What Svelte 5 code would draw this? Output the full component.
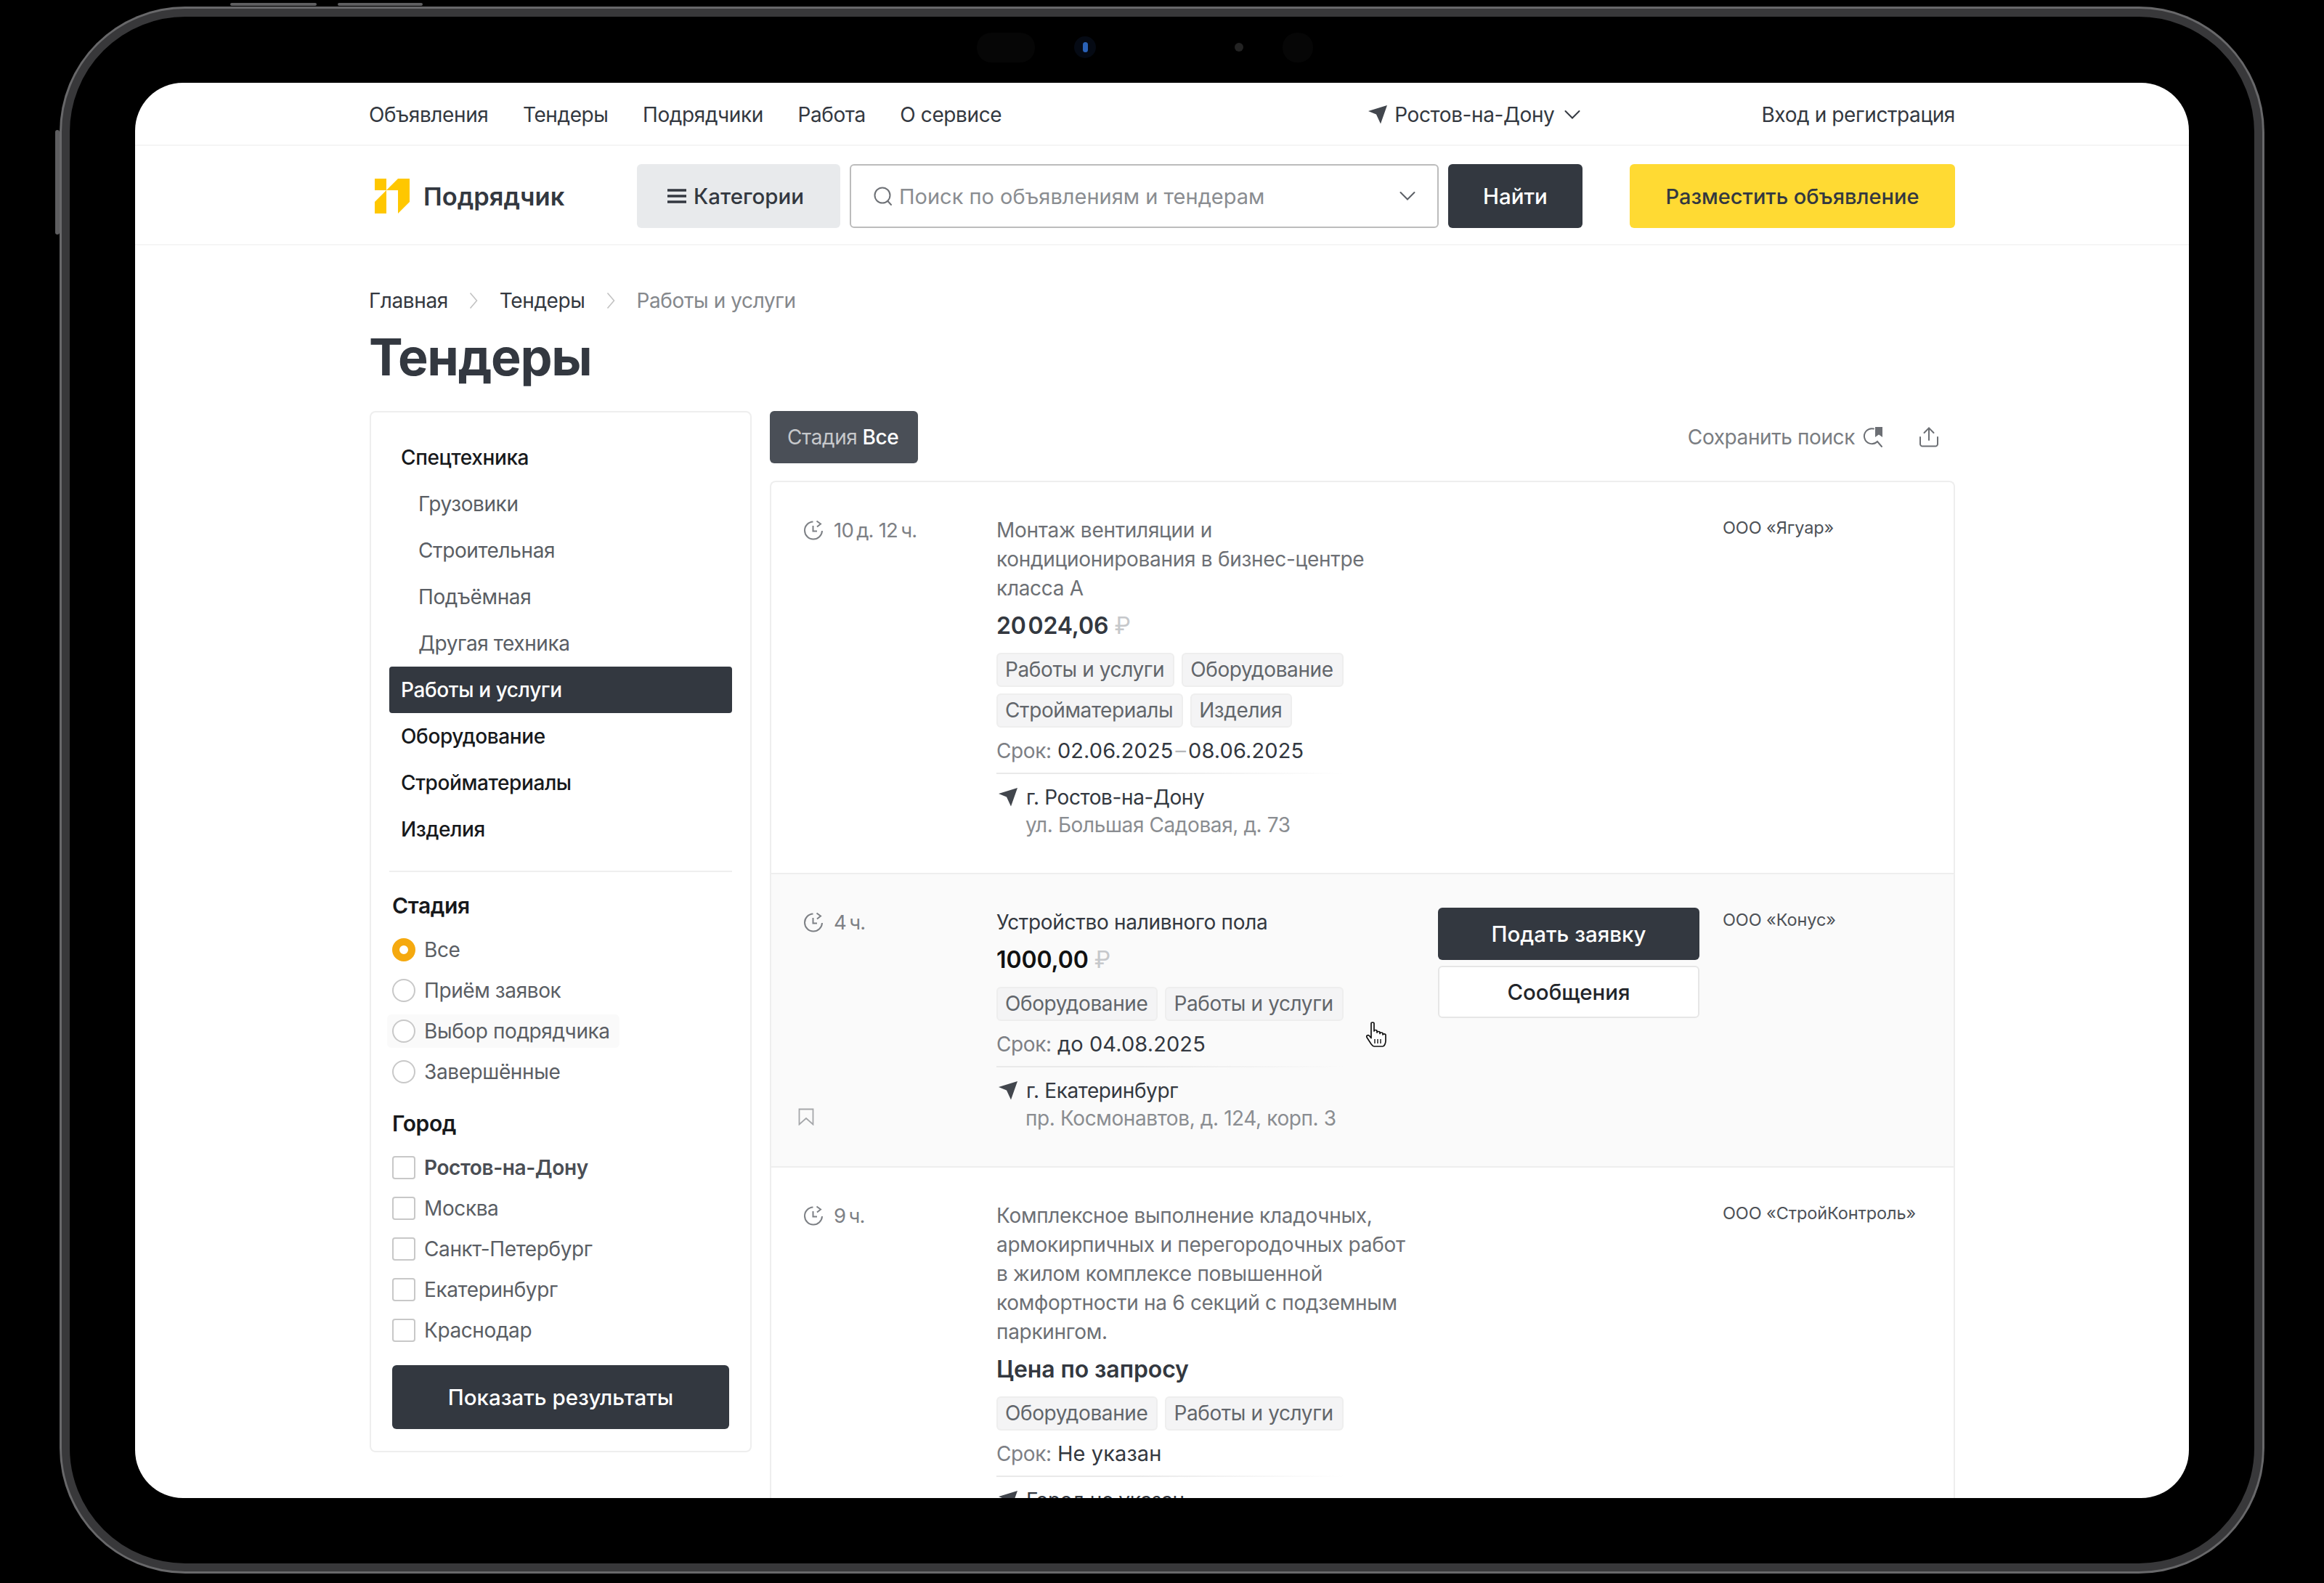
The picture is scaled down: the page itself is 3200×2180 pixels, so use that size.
<script>
  const navLinks = ['Объявления', 'Тендеры', 'Подрядчики', 'Работа', 'О сервисе'];

  const categories = [
    { label: 'Спецтехника', kind: 'top' },
    { label: 'Грузовики', kind: 'sub' },
    { label: 'Строительная', kind: 'sub' },
    { label: 'Подъёмная', kind: 'sub' },
    { label: 'Другая техника', kind: 'sub' },
    { label: 'Работы и услуги', kind: 'active' },
    { label: 'Оборудование', kind: 'top' },
    { label: 'Стройматериалы', kind: 'top' },
    { label: 'Изделия', kind: 'top' }
  ];

  const stages = ['Все', 'Приём заявок', 'Выбор подрядчика', 'Завершённые'];
  const cities = ['Ростов-на-Дону', 'Москва', 'Санкт-Петербург', 'Екатеринбург', 'Краснодар'];

  const tenders = [
    {
      time: '10\u2009д. 12\u2009ч.',
      title: ['Монтаж вентиляции и', 'кондиционирования в бизнес-центре', 'класса А'],
      price: '20\u200a024,06',
      tags: ['Работы и услуги', 'Оборудование', 'Стройматериалы', 'Изделия'],
      term: ['02.06.2025', '08.06.2025'],
      city: 'г. Ростов-на-Дону',
      address: 'ул. Большая Садовая, д. 73',
      org: 'ООО «Ягуар»'
    },
    {
      time: '4\u2009ч.',
      title: ['Устройство наливного пола'],
      price: '1000,00',
      tags: ['Оборудование', 'Работы и услуги'],
      term: ['до 04.08.2025'],
      city: 'г. Екатеринбург',
      address: 'пр. Космонавтов, д. 124, корп. 3',
      org: 'ООО «Конус»',
      hovered: true
    },
    {
      time: '9\u2009ч.',
      title: [
        'Комплексное выполнение кладочных,',
        'армокирпичных и перегородочных работ',
        'в жилом комплексе повышенной',
        'комфортности на 6 секций с подземным',
        'паркингом.'
      ],
      tags: ['Оборудование', 'Работы и услуги'],
      term: ['Не указан'],
      city: 'Город не указан',
      address: '',
      org: 'ООО «СтройКонтроль»'
    }
  ];
</script>

{#snippet arrowIcon(cls)}
  <svg class={cls} viewBox="0 0 26 26" aria-hidden="true">
    <path d="M26 0 L0 8 L11 12.5 L17 25.5 Z" fill="currentColor" />
  </svg>
{/snippet}

{#snippet chevronDown()}
  <svg class="chev" viewBox="0 0 22 14" fill="none" aria-hidden="true">
    <path d="M1.5 2 L11 11.5 L20.5 2" stroke="currentColor" stroke-width="2" stroke-linecap="round" />
  </svg>
{/snippet}

{#snippet crumbChevron()}
  <svg class="crumb-sep" viewBox="0 0 12 24" fill="none" aria-hidden="true">
    <path d="M1.5 1.5 L10.5 12 L1.5 22.5" stroke="currentColor" stroke-width="1.6" />
  </svg>
{/snippet}

<div class="stage">
  <div class="device">
    <i class="btn-top one"></i>
    <i class="btn-top two"></i>
    <i class="btn-side"></i>
    <i class="sensor pill-a"></i>
    <i class="sensor cam"><b></b></i>
    <i class="sensor dot"></i>
    <i class="sensor pill-b"></i>

    <div class="screen">
      <div class="topbar">
        <div class="wrap topbar-in">
          <nav class="nav">
            {#each navLinks as link}
              <span>{link}</span>
            {/each}
          </nav>
          <div class="city">
            {@render arrowIcon('arrow')}
            <span>Ростов-на-Дону</span>
            {@render chevronDown()}
          </div>
          <span class="login">Вход и регистрация</span>
        </div>
      </div>

      <header class="header">
        <div class="wrap header-in">
          <div class="logo">
            <svg viewBox="0 0 48 48" class="logo-mark" aria-hidden="true">
              <path d="M0 0H16V16H0Z M16 16V48H0V32Z M32 0H48V32L32 48V16H16Z" fill="#ffc700" />
            </svg>
            <span>Подрядчик</span>
          </div>
          <button class="cat-btn">
            <svg viewBox="0 0 26 20" class="burger" aria-hidden="true">
              <path d="M0 2H26M0 10H26M0 18H26" stroke="currentColor" stroke-width="3.4" />
            </svg>
            Категории
          </button>
          <div class="search">
            <svg viewBox="0 0 28 28" class="search-ico" fill="none" aria-hidden="true">
              <circle cx="13" cy="13" r="10.5" stroke="currentColor" stroke-width="2" />
              <path d="M20.5 21 L25 26" stroke="currentColor" stroke-width="2" stroke-linecap="round" />
            </svg>
            <span>Поиск по объявлениям и тендерам</span>
            {@render chevronDown()}
          </div>
          <button class="find-btn">Найти</button>
          <button class="post-btn">Разместить объявление</button>
        </div>
      </header>

      <div class="wrap page">
        <div class="crumbs">
          <span>Главная</span>
          {@render crumbChevron()}
          <span>Тендеры</span>
          {@render crumbChevron()}
          <span class="crumb-last">Работы и услуги</span>
        </div>
        <h1>Тендеры</h1>

        <div class="columns">
          <aside class="side">
            <ul class="cats">
              {#each categories as cat}
                <li class={cat.kind}>{cat.label}</li>
              {/each}
            </ul>
            <div class="filters">
              <h3>Стадия</h3>
              <div class="opts">
                {#each stages as stage, i}
                  <div class="opt" class:hover={i === 2}>
                    <i class="radio" class:on={i === 0}></i>
                    <span>{stage}</span>
                  </div>
                {/each}
              </div>
              <h3 class="city-head">Город</h3>
              <div class="opts">
                {#each cities as city, i}
                  <div class="opt" class:strong={i === 0}>
                    <i class="check"></i>
                    <span>{city}</span>
                  </div>
                {/each}
              </div>
              <button class="show-btn">Показать результаты</button>
            </div>
          </aside>

          <main class="main">
            <div class="toolbar">
              <div class="chip"><span>Стадия</span> Все</div>
              <div class="save">
                <span>Сохранить поиск</span>
                <svg viewBox="0 0 30 30" class="save-ico" fill="none" aria-hidden="true">
                  <path d="M16 3.5 A10.5 10.5 0 1 0 21 21 L27 28" stroke="currentColor" stroke-width="2" stroke-linecap="round" />
                  <path d="M18 1H28V15L23 11.5L18 15Z" fill="currentColor" />
                </svg>
              </div>
              <svg viewBox="0 0 28 28" class="share" fill="none" aria-hidden="true">
                <path d="M14 18V2M7.5 8L14 1.5L20.5 8" stroke="currentColor" stroke-width="2" stroke-linecap="round" />
                <path d="M2 14V23.5A3 3 0 0 0 5 26.5H23A3 3 0 0 0 26 23.5V14" stroke="currentColor" stroke-width="2" stroke-linecap="round" />
              </svg>
            </div>

            <div class="list">
              {#each tenders as t}
                <article class="row" class:hovered={t.hovered}>
                  <div class="when">
                    <svg viewBox="0 0 28 28" class="clock" fill="none" aria-hidden="true">
                      <path d="M13.5 2.5 A12 12 0 1 0 26 15" stroke="currentColor" stroke-width="2" />
                      <path d="M18.5 1.5 L24 5.5 L19 9.5" stroke="currentColor" stroke-width="2" />
                      <path d="M13.5 8V15.5H19" stroke="currentColor" stroke-width="2" />
                    </svg>
                    <span>{t.time}</span>
                    {#if t.hovered}
                      <svg viewBox="0 0 22 24" class="mark" fill="none" aria-hidden="true">
                        <path d="M1.5 1.5H20.5V22.5L11 14L1.5 22.5Z" stroke="currentColor" stroke-width="1.8" />
                      </svg>
                    {/if}
                  </div>

                  <div class="body">
                    <div class="title">
                      {#each t.title as line}
                        <div>{line}</div>
                      {/each}
                    </div>
                    <div class="price">
                      {#if t.price}
                        {t.price} <span class="rub">₽</span>
                      {:else}
                        Цена по запросу
                      {/if}
                    </div>
                    <div class="tags">
                      {#each t.tags as tag}
                        <span class="tag">{tag}</span>
                      {/each}
                    </div>
                    <div class="term">
                      <span class="term-label">Срок:</span>
                      {#if t.term.length === 2}
                        {t.term[0]}<span class="dash">–</span>{t.term[1]}
                      {:else}
                        {t.term[0]}
                      {/if}
                    </div>
                    <div class="rule"></div>
                    <div class="place">
                      {@render arrowIcon('arrow')}
                      <span>{t.city}</span>
                    </div>
                    <div class="address">{t.address}</div>
                  </div>

                  <div class="actions">
                    {#if t.hovered}
                      <button class="apply">Подать заявку</button>
                      <button class="messages">Сообщения</button>
                    {/if}
                  </div>

                  <div class="org">{t.org}</div>

                  {#if t.hovered}
                    <svg viewBox="0 0 32 36" class="cursor" aria-hidden="true">
                      <path d="M8 2.5C8 0.5 12 0.5 12 2.5V13C12 11 16 11 16 13V15C16 13 20 13 20 15V16.5C20 14.5 24 14.5 24 16.5V18C24 16.5 28 16.5 28 18.5V26C28 30 26 34 24 34H12C10 34 9 32 7.5 30L2 21.5C1 19 4 17.5 5.5 19.5L8 22.5Z" fill="#fff" stroke="#111" stroke-width="1.7" stroke-linejoin="round" />
                      <path d="M13 24V30M17 24V30M21 24V30" stroke="#111" stroke-width="1.4" />
                    </svg>
                  {/if}
                </article>
              {/each}
            </div>
          </main>
        </div>
      </div>
    </div>
  </div>
</div>

<style>
  :global(body) {
    margin: 0;
    background: #000;
  }

  .stage {
    width: 3200px;
    height: 2180px;
    background: #000;
    padding: 12px 85px 0;
    box-sizing: border-box;
    font-family: Inter, 'Liberation Sans', sans-serif;
    color: #333840;
    font-size: 28px;
    letter-spacing: -0.4px;
  }

  .device {
    position: relative;
    width: 3030px;
    height: 2152px;
    box-sizing: border-box;
    padding: 91px 90px 90px;
    border: 11px solid #38383a;
    border-radius: 170px;
    box-shadow: 0 0 0 3px #68686a;
    background: #000;
  }

  .btn-top,
  .btn-side {
    position: absolute;
    background: #5e5e60;
    border-radius: 3px;
  }

  .btn-top {
    top: -19px;
    height: 4px;
  }

  .btn-top.one {
    left: 221px;
    width: 119px;
  }

  .btn-top.two {
    left: 369px;
    width: 117px;
  }

  .btn-side {
    left: -20px;
    top: 156px;
    width: 6px;
    height: 144px;
  }

  .sensor {
    position: absolute;
    display: block;
  }

  .pill-a {
    left: 1249px;
    top: 22px;
    width: 80px;
    height: 41px;
    border-radius: 20px;
    background: #060606;
  }

  .cam {
    left: 1383px;
    top: 27px;
    width: 30px;
    height: 30px;
    border-radius: 50%;
    background: #050a14;
  }

  .cam b {
    display: block;
    width: 7px;
    height: 14px;
    margin: 8px auto 0;
    border-radius: 4px;
    background: #2a62b8;
  }

  .dot {
    left: 1604px;
    top: 36px;
    width: 12px;
    height: 12px;
    border-radius: 50%;
    background: #232323;
  }

  .pill-b {
    left: 1670px;
    top: 22px;
    width: 42px;
    height: 41px;
    border-radius: 20px;
    background: #060606;
  }

  .screen {
    width: 2828px;
    height: 1949px;
    overflow: hidden;
    background: #fff;
    border-radius: 66px;
  }

  .wrap {
    width: 2184px;
    margin: 0 auto;
  }

  .topbar {
    border-bottom: 2px solid #f5f5f5;
  }

  .topbar-in {
    display: flex;
    align-items: center;
    height: 83px;
    padding-top: 2px;
  }

  .nav {
    display: flex;
    gap: 47.5px;
  }

  .city {
    margin-left: auto;
    display: flex;
    align-items: center;
    gap: 10px;
  }

  .arrow {
    width: 26px;
    height: 26px;
    color: #42464d;
    flex: none;
  }

  .chev {
    width: 22px;
    height: 14px;
    flex: none;
    margin-left: 4px;
  }

  .login {
    margin-left: 249px;
  }

  .header {
    border-bottom: 2px solid #f5f5f5;
  }

  .header-in {
    display: flex;
    align-items: center;
    padding: 25px 0 22px;
  }

  .logo {
    width: 369px;
    box-sizing: border-box;
    padding-left: 8px;
    display: flex;
    align-items: center;
    gap: 19px;
    font-size: 34.5px;
    font-weight: 600;
    letter-spacing: 0;
  }

  .logo-mark {
    width: 48px;
    height: 48px;
  }

  button {
    font: inherit;
    font-size: 29.5px;
    letter-spacing: 0;
    border: 0;
    border-radius: 6px;
    height: 88px;
  }

  .cat-btn {
    width: 280px;
    padding: 0 0 0 42px;
    background: #e8eaec;
    color: #333840;
    font-weight: 500;
    display: flex;
    align-items: center;
    gap: 10px;
  }

  .burger {
    width: 26px;
    height: 20px;
  }

  .search {
    width: 811px;
    height: 88px;
    box-sizing: border-box;
    margin: 0 13px;
    padding: 0 30px;
    border: 2px solid #bcbcbc;
    border-radius: 6px;
    display: flex;
    align-items: center;
    gap: 8px;
    color: #8a8d91;
    font-size: 29px;
    letter-spacing: 0;
  }

  .search span {
    flex: 1;
  }

  .search .chev {
    color: #5b5f65;
  }

  .search-ico {
    width: 28px;
    height: 28px;
    color: #6e7176;
  }

  .find-btn {
    width: 185px;
    background: #333840;
    color: #fff;
    font-weight: 500;
  }

  .post-btn {
    margin-left: auto;
    width: 448px;
    background: #ffda33;
    color: #333840;
    font-weight: 500;
    font-size: 29px;
  }

  .crumbs {
    display: flex;
    align-items: center;
    gap: 29.5px;
    margin-top: 56px;
    height: 40px;
  }

  .crumb-sep {
    width: 12px;
    height: 24px;
    color: #c2c2c2;
  }

  .crumb-last {
    color: #85888c;
  }

  h1 {
    margin: 18px 0 0;
    font-size: 70px;
    line-height: 80px;
    font-weight: 700;
    letter-spacing: -1.3px;
  }

  .columns {
    display: flex;
    gap: 25px;
    margin-top: 34px;
    align-items: flex-start;
  }

  .side {
    flex: none;
    width: 526px;
    margin-left: 1px;
    box-sizing: border-box;
    border: 2px solid #eeeeee;
    border-radius: 8px;
    padding: 30px 25px 30px;
  }

  .cats {
    list-style: none;
    margin: 0;
    padding: 0 0 25px;
    border-bottom: 2px solid #efefef;
  }

  .cats li {
    height: 64px;
    line-height: 64px;
    padding-left: 16px;
    border-radius: 4px;
  }

  .cats .top {
    color: #17191c;
    font-weight: 500;
  }

  .cats .sub {
    padding-left: 40px;
    color: #5a5e64;
  }

  .cats .active {
    background: #333840;
    color: #fff;
    font-weight: 500;
  }

  .filters {
    padding: 0 4px;
  }

  h3 {
    margin: 26px 0 13px;
    font-size: 30px;
    line-height: 40px;
    font-weight: 600;
    color: #17191c;
  }

  .city-head {
    margin-top: 23px;
  }

  .opt {
    position: relative;
    display: flex;
    align-items: center;
    gap: 12px;
    height: 56px;
    color: #5a5e64;
  }

  .opt.hover::before {
    content: '';
    position: absolute;
    left: -7px;
    top: 5px;
    width: 320px;
    height: 46px;
    background: #fafafa;
    border-radius: 6px;
  }

  .opt > * {
    position: relative;
  }

  .opt.strong {
    font-weight: 600;
    color: #4a4e54;
  }

  .radio,
  .check {
    display: block;
    box-sizing: border-box;
    width: 32px;
    height: 32px;
    border: 2px solid #c8c8c8;
    background: #fff;
  }

  .radio {
    border-radius: 50%;
  }

  .radio.on {
    border: 10px solid #f5a90f;
  }

  .check {
    border-radius: 4px;
  }

  .show-btn {
    display: block;
    width: 464px;
    margin-top: 20px;
    background: #333840;
    color: #fff;
    font-weight: 500;
    font-size: 29.5px;
  }

  .main {
    flex: 1;
    min-width: 0;
  }

  .toolbar {
    display: flex;
    align-items: center;
    height: 72px;
    margin-bottom: 24px;
    color: #7a7d82;
  }

  .chip {
    height: 72px;
    line-height: 72px;
    width: 204px;
    box-sizing: border-box;
    padding-left: 24px;
    border-radius: 6px;
    background: #4a4f57;
    color: #fff;
    font-weight: 500;
  }

  .chip span {
    color: #c6c8cb;
    font-weight: 400;
  }

  .save {
    margin-left: auto;
    display: flex;
    align-items: center;
    gap: 10px;
  }

  .save-ico {
    width: 30px;
    height: 30px;
    color: #6c6f74;
  }

  .share {
    width: 28px;
    height: 28px;
    margin: 0 22px 0 48px;
    color: #6c6f74;
  }

  .list {
    border: 2px solid #eeeeee;
    border-bottom: 0;
    border-radius: 8px 8px 0 0;
  }

  .row {
    position: relative;
    display: grid;
    grid-template-columns: 236px 578px 360px 1fr;
    column-gap: 30px;
    padding: 46px 0 47px 44px;
    border-bottom: 2px solid #eeeeee;
  }

  .row.hovered {
    background: #fafafa;
  }

  .when {
    position: relative;
    display: flex;
    align-items: flex-start;
    gap: 14px;
    font-size: 27.5px;
    letter-spacing: -0.8px;
    line-height: 40px;
    color: #7d8085;
  }

  .clock {
    width: 28px;
    height: 28px;
    margin-top: 6px;
    color: #7d8085;
    flex: none;
  }

  .mark {
    position: absolute;
    left: -7px;
    top: 276px;
    width: 22px;
    height: 24px;
    color: #a5a7aa;
  }

  .title {
    line-height: 40px;
    letter-spacing: -0.3px;
    color: #6d7075;
  }

  .hovered .title {
    color: #333840;
  }

  .price {
    margin-top: 10px;
    font-size: 32px;
    line-height: 44px;
    font-weight: 600;
    letter-spacing: -0.1px;
  }

  .hovered .price {
    color: #111;
  }

  .rub {
    color: #c6c8cb;
    font-weight: 400;
  }

  .tags {
    display: flex;
    flex-wrap: wrap;
    gap: 9px 10px;
    margin-top: 15px;
    width: 520px;
  }

  .tag {
    box-sizing: border-box;
    height: 47px;
    line-height: 43px;
    padding: 0 12px 0 10px;
    background: #f4f4f5;
    border: 2px solid #eeeeee;
    border-radius: 6px;
    color: #62666b;
  }

  .term {
    margin-top: 12px;
    line-height: 40px;
    font-size: 29px;
    letter-spacing: 0.1px;
  }

  .term-label {
    font-size: 28px;
    letter-spacing: -0.4px;
    color: #7d8085;
  }

  .dash {
    color: #b5b7ba;
    margin: 0 3px;
  }

  .rule {
    height: 2px;
    margin-top: 10px;
    width: 480px;
    background: linear-gradient(90deg, #e9e9e9 40%, transparent);
  }

  .place {
    display: flex;
    align-items: center;
    gap: 12px;
    margin-top: 13px;
    line-height: 38px;
    padding-left: 3px;
  }

  .address {
    padding-left: 40px;
    line-height: 38px;
    min-height: 38px;
    color: #8a8d91;
  }

  .actions {
    display: flex;
    flex-direction: column;
    gap: 8px;
  }

  .actions button {
    height: 72px;
    width: 360px;
  }

  .apply {
    background: #333840;
    color: #fff;
    font-weight: 500;
  }

  .messages {
    background: #fff;
    color: #22252a;
    font-weight: 500;
    border: 2px solid #e6e6e6;
  }

  .org {
    margin-left: 2px;
    font-size: 23.5px;
    line-height: 34px;
    letter-spacing: -0.1px;
    white-space: nowrap;
    color: #4d5157;
  }

  .cursor {
    position: absolute;
    left: 818px;
    top: 203px;
    width: 32px;
    height: 36px;
  }
</style>
